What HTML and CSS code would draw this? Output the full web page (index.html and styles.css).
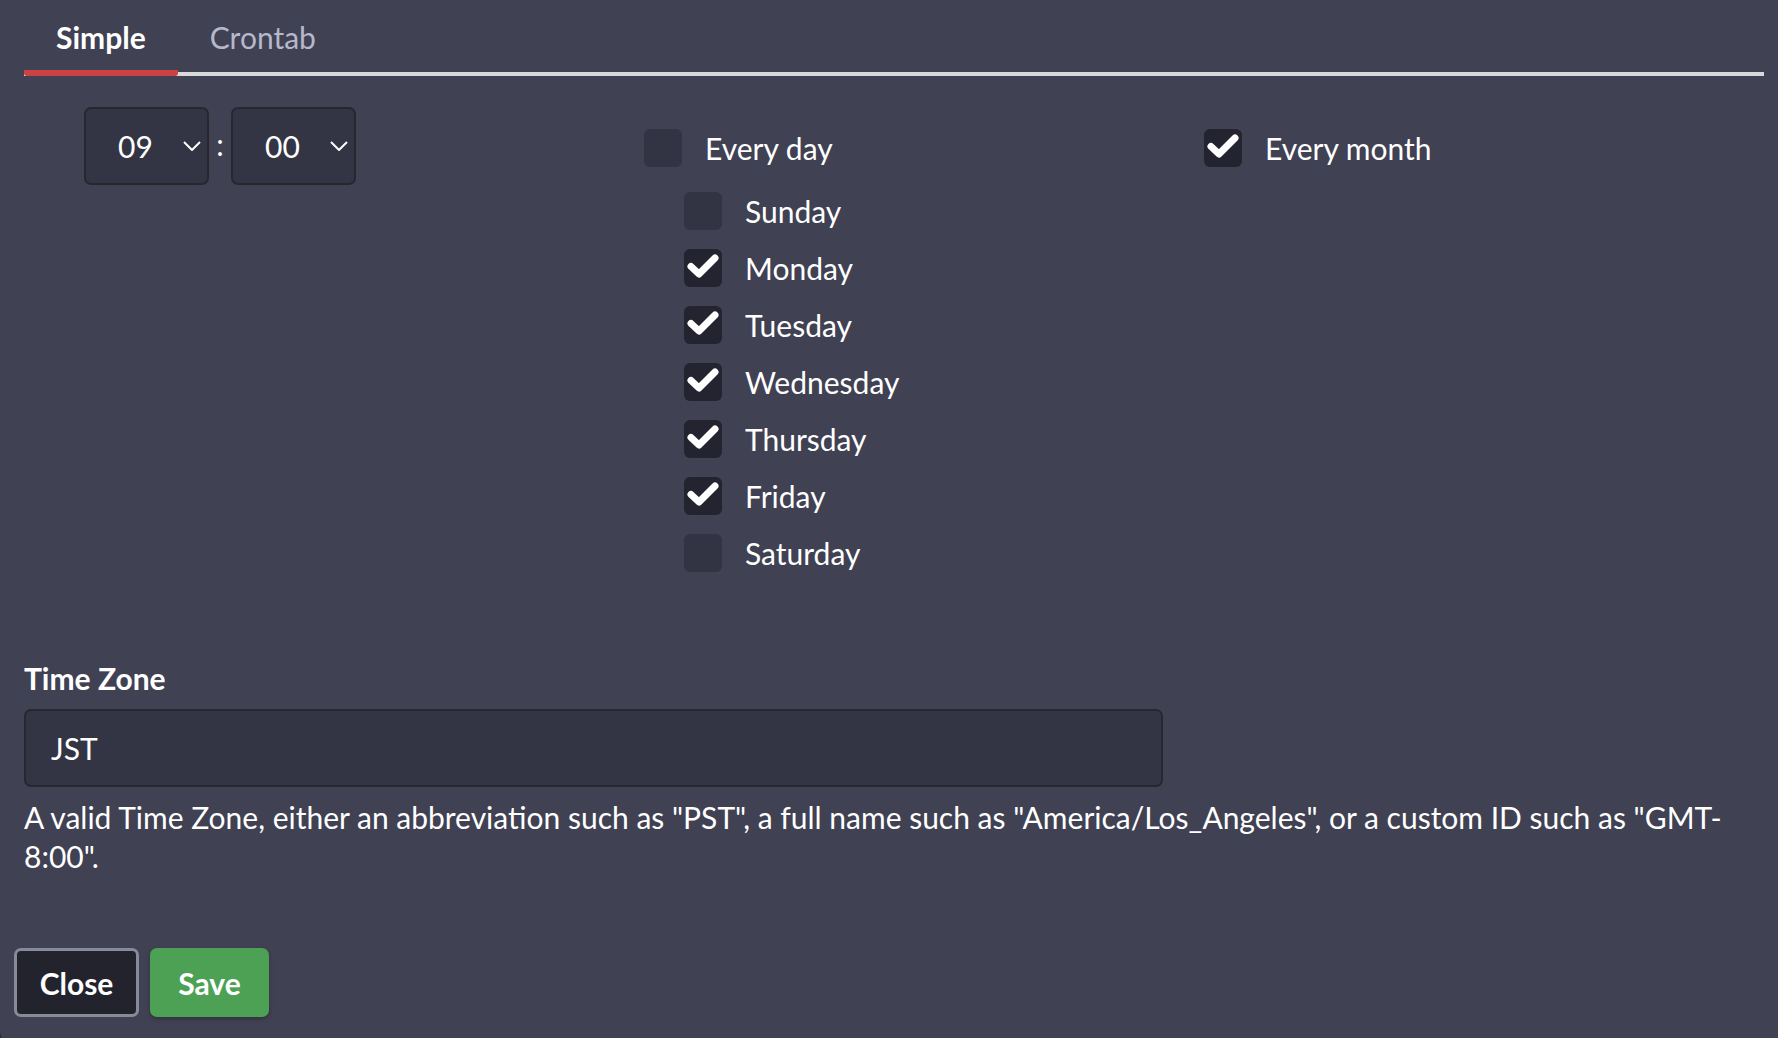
FILE: index.html
```html
<!DOCTYPE html>
<html lang="en">
<head>
<meta charset="utf-8">
<title>Schedule</title>
<link rel="stylesheet" href="styles.css">
</head>
<body>
<div class="panel">
  <nav class="tabs">
    <div class="tab active">Simple</div>
    <div class="tab">Crontab</div>
  </nav>
  <div class="content">
    <div class="schedule">
      <div class="time">
        <div class="select"><span>09</span><svg class="chev" width="18" height="10" viewBox="0 0 18 10"><path d="M1 1 L9 9 L17 1" fill="none" stroke="#fff" stroke-width="2"/></svg></div>
        <span class="colon">:</span>
        <div class="select"><span>00</span><svg class="chev" width="18" height="10" viewBox="0 0 18 10"><path d="M1 1 L9 9 L17 1" fill="none" stroke="#fff" stroke-width="2"/></svg></div>
      </div>
      <div class="days">
        <label class="check"><span class="box"></span>Every day</label>
        <div class="daylist">
          <label class="check"><span class="box"></span>Sunday</label>
          <label class="check"><span class="box on"><svg viewBox="0 0 38 38"><path d="M7 17.5 L15 25 L31 9" fill="none" stroke="#fff" stroke-width="7" stroke-linecap="round" stroke-linejoin="round"/></svg></span>Monday</label>
          <label class="check"><span class="box on"><svg viewBox="0 0 38 38"><path d="M7 17.5 L15 25 L31 9" fill="none" stroke="#fff" stroke-width="7" stroke-linecap="round" stroke-linejoin="round"/></svg></span>Tuesday</label>
          <label class="check"><span class="box on"><svg viewBox="0 0 38 38"><path d="M7 17.5 L15 25 L31 9" fill="none" stroke="#fff" stroke-width="7" stroke-linecap="round" stroke-linejoin="round"/></svg></span>Wednesday</label>
          <label class="check"><span class="box on"><svg viewBox="0 0 38 38"><path d="M7 17.5 L15 25 L31 9" fill="none" stroke="#fff" stroke-width="7" stroke-linecap="round" stroke-linejoin="round"/></svg></span>Thursday</label>
          <label class="check"><span class="box on"><svg viewBox="0 0 38 38"><path d="M7 17.5 L15 25 L31 9" fill="none" stroke="#fff" stroke-width="7" stroke-linecap="round" stroke-linejoin="round"/></svg></span>Friday</label>
          <label class="check"><span class="box"></span>Saturday</label>
        </div>
      </div>
      <div class="months">
        <label class="check"><span class="box on"><svg viewBox="0 0 38 38"><path d="M7 17.5 L15 25 L31 9" fill="none" stroke="#fff" stroke-width="7" stroke-linecap="round" stroke-linejoin="round"/></svg></span>Every month</label>
      </div>
    </div>
    <div class="tz">
      <div class="tz-label">Time Zone</div>
      <div class="input">JST</div>
      <p class="help">A valid Time Zone, either an abbreviation such as "PST", a full name such as "America/Los_Angeles", or a custom ID such as "GMT-<wbr>8:00".</p>
    </div>
  </div>
  <div class="footer">
    <button class="btn close">Close</button>
    <button class="btn save">Save</button>
  </div>
</div>
</body>
</html>
```
FILE: styles.css
```css
html, body {
  margin: 0;
  padding: 0;
  background: #2c2d39;
  height: 100%;
  overflow: hidden;
}
body {
  font-family: Lato, "Open Sans", sans-serif;
  font-size: 30px;
  color: #fff;
}
.panel {
  background: #404152;
  height: 1046px;
  border-bottom-left-radius: 16px;
}
.tabs {
  display: flex;
  margin: 0 14px 0 24px;
  box-shadow: inset 0 -4px 0 #d9d9d9;
}
.tab {
  padding: 16px 32px 12px;
  line-height: 42px;
  color: #b6b8cc;
  border-bottom: 6px solid transparent;
  border-radius: 3px;
}
.tab.active {
  color: #fff;
  font-weight: 700;
  border-bottom-color: #cc4141;
}
.content {
  padding: 0 15px 0 24px;
}
.schedule {
  display: grid;
  grid-template-columns: 560px 560px 1fr;
  align-items: start;
  margin: 31px 0 0 60px;
}
.time {
  display: flex;
  align-items: center;
}
.select {
  box-sizing: border-box;
  width: 125px;
  height: 78px;
  border: 2px solid #26272f;
  background: #343544;
  border-radius: 7px;
  display: flex;
  align-items: center;
  padding: 0 6px 0 32px;
}
.chev {
  margin-left: auto;
}
.colon {
  width: 22px;
  text-align: center;
  margin-bottom: 5px;
}
.days {
  padding-top: 22px;
}
.months {
  padding-top: 22px;
}
.check {
  display: flex;
  align-items: center;
  gap: 23px;
  height: 38px;
}
.box {
  flex: none;
  width: 38px;
  height: 38px;
  border-radius: 6px;
  background: #323343;
}
.box svg {
  display: block;
  width: 38px;
  height: 38px;
}
.box.on {
  background: #242430;
}
.daylist {
  margin: 25px 0 0 40px;
  display: flex;
  flex-direction: column;
  gap: 19px;
}
.tz {
  margin-top: 86px;
}
.tz-label {
  font-weight: 700;
  line-height: 40px;
}
.input {
  box-sizing: border-box;
  margin-top: 11px;
  width: 1139px;
  height: 78px;
  border: 2px solid #26272f;
  background: #343544;
  border-radius: 7px;
  display: flex;
  align-items: center;
  padding-left: 25px;
}
.help {
  margin: 11px 0 0;
  line-height: 39px;
}
.footer {
  display: flex;
  gap: 11px;
  padding-left: 14px;
  margin-top: 72px;
}
.btn {
  box-sizing: border-box;
  height: 69px;
  font-family: Lato, "Open Sans", sans-serif;
  font-size: 30px;
  font-weight: 700;
  color: #fff;
  border-radius: 7px;
  padding: 0;
}
.close {
  width: 125px;
  background: #23232d;
  border: 3px solid #878a99;
}
.save {
  width: 119px;
  background: #4ca155;
  border: none;
  box-shadow: 0 2px 4px rgba(0, 0, 0, 0.25);
}
```
